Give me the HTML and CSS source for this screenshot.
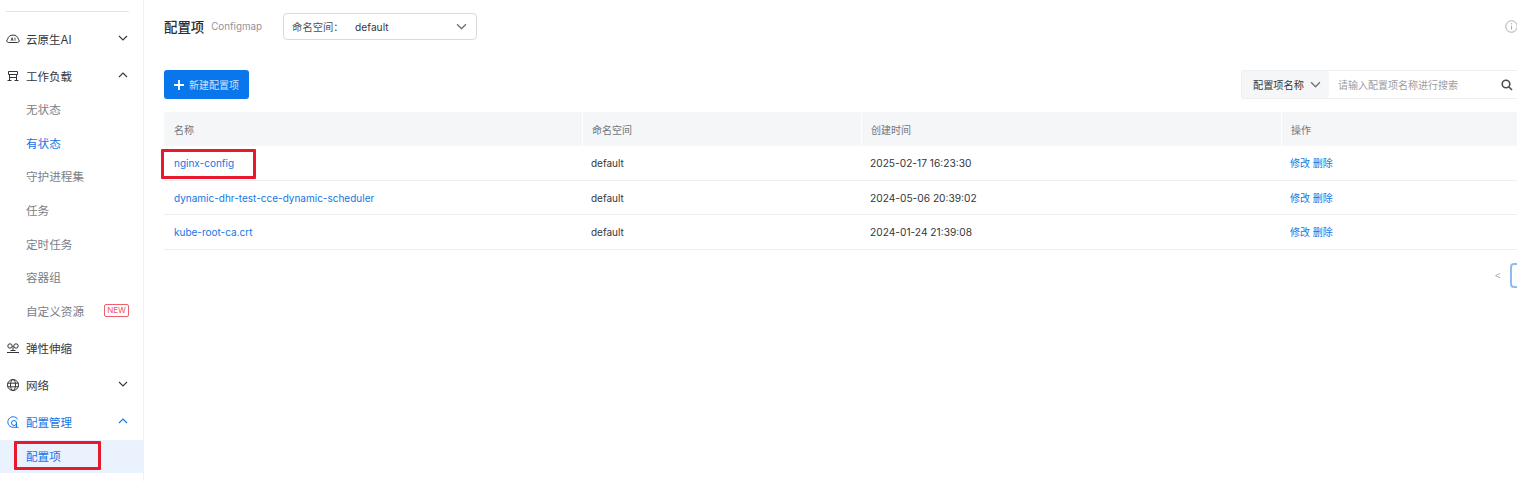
FILE: index.html
```html
<!DOCTYPE html>
<html lang="en">
<head>
    <meta charset="UTF-8">
    <meta name="viewport" content="width=device-width, initial-scale=1.0">
    <title>配置项</title>
    <link rel="stylesheet" href="styles.css">
</head>
<body>
    <div class="sidebar">
        <div class="side-rule"></div>
        <div class="nav-group">
            <svg class="nav-icon" viewBox="0 0 14 14"><path d="M2.500 10.500h9a1.800 1.800 0 0 0 .9-3.300A5.600 5.600 0 0 0 1.600 7.200a1.800 1.800 0 0 0 .9 3.300z"/><path class="thin" d="M5 8.800l1.100-3.200 1.100 3.200M5.400 7.800h1.400M9 5.600v3.200"/></svg>
            <span class="nav-label">云原生AI</span>
            <svg class="caret" viewBox="0 0 10 6"><path d="M1 1l4 4 4-4"/></svg>
        </div>
        <div class="nav-group">
            <svg class="nav-icon" viewBox="0 0 14 14"><path d="M2.500 2.500h9v3h-9zM3.500 5.500v6M10.500 5.500v6M1.500 11.500h4M8.500 11.500h4M3.500 8.500h7"/></svg>
            <span class="nav-label">工作负载</span>
            <svg class="caret" viewBox="0 0 10 6"><path d="M1 5l4-4 4 4"/></svg>
        </div>
        <div class="nav-sub">无状态</div>
        <div class="nav-sub is-blue">有状态</div>
        <div class="nav-sub">守护进程集</div>
        <div class="nav-sub">任务</div>
        <div class="nav-sub">定时任务</div>
        <div class="nav-sub">容器组</div>
        <div class="nav-sub">自定义资源<span class="new-tag">NEW</span></div>
        <div class="nav-group">
            <svg class="nav-icon" viewBox="0 0 14 14"><circle cx="4" cy="5" r="2.200"/><circle cx="10" cy="5" r="2.200"/><path d="M7 5v5M1 11.500h12M4.500 9.500h5"/></svg>
            <span class="nav-label">弹性伸缩</span>
        </div>
        <div class="nav-group">
            <svg class="nav-icon" viewBox="0 0 14 14"><circle cx="7" cy="7" r="5.500"/><ellipse cx="7" cy="7" rx="2.500" ry="5.500"/><path d="M1.500 5.200h11M1.500 8.800h11"/></svg>
            <span class="nav-label">网络</span>
            <svg class="caret" viewBox="0 0 10 6"><path d="M1 1l4 4 4-4"/></svg>
        </div>
        <div class="nav-group is-blue">
            <svg class="nav-icon" viewBox="0 0 14 14"><path d="M11.800 4.500A5.300 5.300 0 1 0 6.500 12.300h6"/><circle cx="8" cy="8" r="2.500"/><path d="M10.500 8v4"/></svg>
            <span class="nav-label">配置管理</span>
            <svg class="caret" viewBox="0 0 10 6"><path d="M1 5l4-4 4 4"/></svg>
        </div>
        <div class="nav-sub is-blue is-active">配置项</div>
    </div>

    <div class="main">
        <div class="page-head">
            <span class="page-title">配置项</span>
            <span class="page-sub">Configmap</span>
            <div class="ns-select">
                <span class="ns-label">命名空间：</span>
                <span class="ns-value">default</span>
                <svg class="ns-caret" viewBox="0 0 10 6"><path d="M1 1l4 4 4-4"/></svg>
            </div>
            <svg class="info-icon" viewBox="0 0 12 12"><circle cx="6" cy="6" r="5.300"/><path d="M6 5.200v3.600M6 3v1"/></svg>
        </div>

        <div class="toolbar">
            <button class="btn-new"><svg viewBox="0 0 10 10"><path d="M5 0v10M0 5h10"/></svg>新建配置项</button>
            <div class="search">
                <div class="search-type">配置项名称<svg viewBox="0 0 10 6"><path d="M1 1l4 4 4-4"/></svg></div>
                <span class="search-hint">请输入配置项名称进行搜索</span>
                <svg class="search-icon" viewBox="0 0 12 12"><circle cx="5" cy="5" r="3.800"/><path d="M8 8l3 3"/></svg>
            </div>
        </div>

        <div class="table">
            <div class="row head">
                <div class="cell">名称</div><div class="cell">命名空间</div><div class="cell">创建时间</div><div class="cell">操作</div>
            </div>
            <div class="row">
                <div class="cell link">nginx-config</div><div class="cell">default</div><div class="cell date">2025-02-17 16:23:30</div><div class="cell link">修改 删除</div>
            </div>
            <div class="row">
                <div class="cell link">dynamic-dhr-test-cce-dynamic-scheduler</div><div class="cell">default</div><div class="cell date">2024-05-06 20:39:02</div><div class="cell link">修改 删除</div>
            </div>
            <div class="row">
                <div class="cell link">kube-root-ca.crt</div><div class="cell">default</div><div class="cell date">2024-01-24 21:39:08</div><div class="cell link">修改 删除</div>
            </div>
        </div>

        <div class="pager">
            <span class="pager-prev">&lt;</span>
            <span class="pager-num"></span>
        </div>
    </div>

    <!-- red annotation boxes -->
    <div class="mark mark-nav"></div>
    <div class="mark mark-row"></div>
</body>
</html>
```

FILE: styles.css
```css
html, body {
    margin: 0;
    padding: 0;
    height: 100%;
}
body {
    font-family: Inter, "Noto Sans CJK SC", sans-serif;
    font-size: 10px;
    color: #33363d;
    background: #ffffff;
    display: flex;
    overflow: hidden;
    position: relative;
}
svg {
    fill: none;
    stroke: currentColor;
    flex: none;
}

/* sidebar */
.sidebar {
    width: 143px;
    flex: none;
    border-right: 1px solid #eef0f3;
    padding-top: 11px;
}
.side-rule {
    height: 1px;
    margin: 0 14px 8px 6px;
    background: #e3e5e8;
}
.nav-group {
    height: 37px;
    display: flex;
    align-items: center;
    padding: 0 15px 0 6px;
    font-size: 11.500px;
}
.nav-sub + .nav-group {
    margin-top: 1.500px;
}
.nav-icon {
    width: 14px;
    height: 14px;
    stroke-width: 1;
    margin-right: 6px;
}
.nav-icon .thin {
    stroke-width: 0.800;
}
.nav-label {
    flex: 1;
}
.caret {
    width: 10px;
    height: 6px;
    stroke-width: 1.100;
    margin-top: -2px;
}
.nav-sub {
    height: 33.600px;
    display: flex;
    align-items: center;
    padding: 0 14px 0 26px;
    font-size: 11.600px;
    color: #7a7e87;
}
.nav-group + .nav-sub {
    margin-top: -1.500px;
}
.nav-sub.is-blue {
    color: #1476e6;
}
.is-blue {
    color: #1476e6;
}
.nav-group + .is-active {
    margin-top: -0.500px;
}
.is-active {
    background: #eaf2fd;
}
.new-tag {
    margin-left: auto;
    height: 11px;
    line-height: 11px;
    padding: 0 2px;
    border: 1px solid #f0606c;
    border-radius: 2px;
    color: #f0505c;
    font-size: 8px;
}

/* main */
.main {
    flex: 1;
    min-width: 0;
    padding: 13px 0 0 20px;
}
.page-head {
    height: 27px;
    display: flex;
    align-items: center;
}
.page-title {
    font-size: 13.400px;
    font-weight: 500;
    color: #2a2d33;
    margin-top: -2px;
}
.page-sub {
    margin-left: 7px;
    font-size: 9.800px;
    color: #8f939b;
}
.ns-select {
    margin-left: 21px;
    width: 194px;
    height: 27px;
    box-sizing: border-box;
    border: 1px solid #d8dade;
    border-radius: 4px;
    display: flex;
    align-items: center;
    padding: 0 9px 0 8px;
}
.ns-label {
    width: 63px;
    font-size: 10.300px;
    color: #4c4f57;
}
.ns-value {
    flex: 1;
    font-size: 10.200px;
}
.ns-caret {
    width: 11px;
    height: 7px;
    stroke-width: 1.200;
    color: #6d7079;
}
.info-icon {
    width: 13px;
    height: 13px;
    margin-left: auto;
    margin-right: -1px;
    color: #a4a7ad;
    stroke-width: 0.850;
}

/* toolbar */
.toolbar {
    margin-top: 30px;
    display: flex;
    justify-content: space-between;
    align-items: center;
}
.btn-new {
    width: 85px;
    height: 29px;
    border: none;
    border-radius: 3px;
    background: #0a76ec;
    color: #cfe3fb;
    font: inherit;
    font-size: 10px;
    display: flex;
    align-items: center;
    padding: 0 0 0 10px;
}
.btn-new svg {
    width: 10px;
    height: 10px;
    margin-right: 5px;
    color: #ffffff;
    stroke-width: 1.800;
}
.search {
    width: 276px;
    height: 29px;
    box-sizing: border-box;
    border: 1px solid #eceef0;
    border-right: none;
    border-radius: 3px 0 0 3px;
    display: flex;
    align-items: center;
}
.search-type {
    width: 87px;
    height: 100%;
    background: #f5f6f7;
    display: flex;
    align-items: center;
    padding-left: 11px;
    box-sizing: border-box;
    font-size: 10.200px;
    border-radius: 3px;
}
.search-type svg {
    width: 11px;
    height: 7px;
    margin-left: 6px;
    color: #70737b;
    stroke-width: 1.200;
}
.search-hint {
    margin-left: 9px;
    font-size: 10px;
    color: #9a9da3;
    flex: 1;
}
.search-icon {
    width: 12px;
    height: 12px;
    margin-right: 4px;
    color: #4a4d55;
    stroke-width: 1.600;
}

/* table */
.table {
    margin-top: 13px;
}
.row {
    display: grid;
    grid-template-columns: 418px 279px 420px 1fr;
    height: 34.500px;
    align-items: center;
    border-bottom: 1px solid #eceef0;
    box-sizing: border-box;
}
.row.head {
    height: 34px;
    background: #f5f6f8;
    border-bottom: none;
    color: #71757f;
}
.cell {
    padding: 1px 0 0 9px;
    line-height: 32px;
    font-size: 10px;
}
.cell:first-child {
    padding-left: 10px;
}
.date {
    font-size: 10.200px;
}
.row.head .cell {
    padding-top: 1px;
}
.row.head .cell + .cell {
    border-left: 1px solid #ffffff;
}
.link {
    color: #1476e6;
}

/* pager */
.pager {
    margin-top: 13px;
    display: flex;
    justify-content: flex-end;
    align-items: center;
    height: 25px;
    transform: translateX(10px);
}
.pager-prev {
    color: #a8abb1;
    font-size: 10px;
    margin-right: 9px;
}
.pager-num {
    width: 17px;
    height: 25px;
    box-sizing: border-box;
    border: 2px solid #8dbcf3;
    border-radius: 4px;
}

/* annotations */
.mark {
    position: absolute;
    border: 3px solid #e8192c;
    border-radius: 1px;
    box-sizing: border-box;
}
.mark-nav {
    left: 14px;
    top: 441px;
    width: 87px;
    height: 29px;
}
.mark-row {
    left: 161px;
    top: 149px;
    width: 95px;
    height: 30px;
}
```
